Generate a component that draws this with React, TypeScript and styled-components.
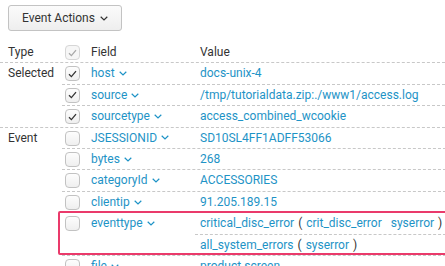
import React from "react";
import styled, { createGlobalStyle } from "styled-components";

const Global = createGlobalStyle`
  html, body { margin: 0; padding: 0; background: #fff; }
  body { font-family: Roboto, "Liberation Sans", sans-serif; font-size: 12px; color: #333; overflow: hidden; }
`;

const Page = styled.div`
  width: 445px;
  height: 266px;
  overflow: hidden;
  padding-top: 5px;
  box-sizing: border-box;
`;

const ActionButton = styled.button`
  margin-left: 8px;
  height: 26px;
  padding: 0 13px 0 13px;
  border: 1px solid #c3c3c3;
  border-radius: 3px;
  background: linear-gradient(#fbfbfb, #eeeeee);
  font-family: inherit;
  font-size: 12px;
  color: #333;
  display: inline-flex;
  align-items: center;
  gap: 5px;
  box-sizing: border-box;
  cursor: pointer;
`;

const Table = styled.div`
  margin-top: 11px;
  display: flex;
  flex-direction: column;
`;

const Dashed = `border-bottom: 1px dashed #c8c8c8;`;

const HeaderRow = styled.div`
  display: grid;
  grid-template-columns: 62px 24px 109px 1fr;
  ${Dashed}
`;

const Group = styled.div`
  display: grid;
  grid-template-columns: 62px 1fr;
  ${Dashed}
`;

const TypeCell = styled.div`
  padding: 2px 0 2px 8px;
  line-height: 16.4px;
  color: #333;
`;

const GroupRows = styled.div`
  display: flex;
  flex-direction: column;
`;

const FieldRow = styled.div<{ $highlight?: boolean; $last?: boolean }>`
  position: relative;
  display: grid;
  grid-template-columns: 24px 109px 1fr;
  ${(p) => (p.$last ? "" : Dashed)}
  ${(p) =>
    p.$highlight
      ? `
    &::after {
      content: "";
      position: absolute;
      left: -4px;
      right: 3px;
      top: -2px;
      bottom: 0px;
      border: 2px solid #ea3a6b;
      border-radius: 2px;
      pointer-events: none;
    }
  `
      : ""}
`;

const Cell = styled.div`
  padding: 2px 5px;
  line-height: 16.4px;
  min-width: 0;
  white-space: nowrap;
`;

const CheckCell = styled.div`
  padding: 3px 0 0 3px;
`;

const Box = styled.span<{ $checked?: boolean; $muted?: boolean }>`
  display: flex;
  align-items: center;
  justify-content: center;
  width: 15px;
  height: 15px;
  box-sizing: border-box;
  border-radius: 4px;
  border: 1px solid ${(p) => (p.$muted ? "#d6d6d6" : "#c2c2c2")};
  background: ${(p) => (p.$muted ? "#f6f6f6" : "linear-gradient(#fdfdfd, #efefef)")};
`;

const HeadText = styled.span`
  color: #333;
`;

const FieldLink = styled.span`
  color: #1e93c6;
  display: inline-flex;
  align-items: center;
  gap: 4px;
`;

const ValueLink = styled.span<{ $gap?: number }>`
  color: #1e93c6;
  margin-right: ${(p) => p.$gap ?? 0}px;
`;

const Paren = styled.span`
  color: #333;
  margin: 0 4px;
`;

const ValueStack = styled.div`
  display: flex;
  flex-direction: column;
`;

const ValueLine = styled.div<{ $sep?: boolean }>`
  padding: 2px 5px;
  line-height: 16.4px;
  white-space: nowrap;
  ${(p) => (p.$sep ? Dashed : "")}
`;

const Chevron = ({ color = "#1e93c6" }: { color?: string }) => (
  <svg width="8" height="5" viewBox="0 0 8 5" style={{ display: "block" }}>
    <path d="M0.7 0.8 L4 4 L7.3 0.8" fill="none" stroke={color} strokeWidth="1.2" />
  </svg>
);

const Check = ({ color }: { color: string }) => (
  <svg width="9" height="8" viewBox="0 0 9 8" style={{ display: "block" }}>
    <path d="M1 4.2 L3.4 6.6 L8 1.2" fill="none" stroke={color} strokeWidth="1.3" />
  </svg>
);

const CheckBox = ({ checked, muted }: { checked?: boolean; muted?: boolean }) => (
  <Box $checked={checked} $muted={muted}>
    {checked && <Check color={muted ? "#a8a8a8" : "#333"} />}
  </Box>
);

type Row = { field: string; value: React.ReactNode; checked?: boolean; highlight?: boolean };

const selected: Row[] = [
  { field: "host", value: <ValueLink>docs-unix-4</ValueLink>, checked: true },
  { field: "source", value: <ValueLink>/tmp/tutorialdata.zip:./www1/access.log</ValueLink>, checked: true },
  { field: "sourcetype", value: <ValueLink>access_combined_wcookie</ValueLink>, checked: true },
];

const eventRows: Row[] = [
  { field: "JSESSIONID", value: <ValueLink>SD10SL4FF1ADFF53066</ValueLink> },
  { field: "bytes", value: <ValueLink>268</ValueLink> },
  { field: "categoryId", value: <ValueLink>ACCESSORIES</ValueLink> },
  { field: "clientip", value: <ValueLink>91.205.189.15</ValueLink> },
  {
    field: "eventtype",
    highlight: true,
    value: (
      <ValueStack>
        <ValueLine $sep>
          <ValueLink>critical_disc_error</ValueLink>
          <Paren>(</Paren>
          <ValueLink $gap={9}>crit_disc_error</ValueLink>
          <ValueLink>syserror</ValueLink>
          <Paren>)</Paren>
        </ValueLine>
        <ValueLine>
          <ValueLink>all_system_errors</ValueLink>
          <Paren>(</Paren>
          <ValueLink>syserror</ValueLink>
          <Paren>)</Paren>
        </ValueLine>
      </ValueStack>
    ),
  },
  { field: "file", value: <ValueLink>product.screen</ValueLink> },
];

const renderRows = (rows: Row[]) =>
  rows.map((r, i) => (
    <FieldRow key={r.field} $highlight={r.highlight} $last={i === rows.length - 1}>
      <CheckCell>
        <CheckBox checked={r.checked} />
      </CheckCell>
      <Cell>
        <FieldLink>
          {r.field}
          <Chevron />
        </FieldLink>
      </Cell>
      {r.highlight ? r.value : <Cell>{r.value}</Cell>}
    </FieldRow>
  ));

export default function App() {
  return (
    <Page>
      <Global />
      <ActionButton>
        Event Actions
        <Chevron color="#333" />
      </ActionButton>
      <Table>
        <HeaderRow>
          <TypeCell>Type</TypeCell>
          <CheckCell>
            <CheckBox checked muted />
          </CheckCell>
          <Cell>
            <HeadText>Field</HeadText>
          </Cell>
          <Cell>
            <HeadText>Value</HeadText>
          </Cell>
        </HeaderRow>
        <Group>
          <TypeCell>Selected</TypeCell>
          <GroupRows>{renderRows(selected)}</GroupRows>
        </Group>
        <Group>
          <TypeCell>Event</TypeCell>
          <GroupRows>{renderRows(eventRows)}</GroupRows>
        </Group>
      </Table>
    </Page>
  );
}
